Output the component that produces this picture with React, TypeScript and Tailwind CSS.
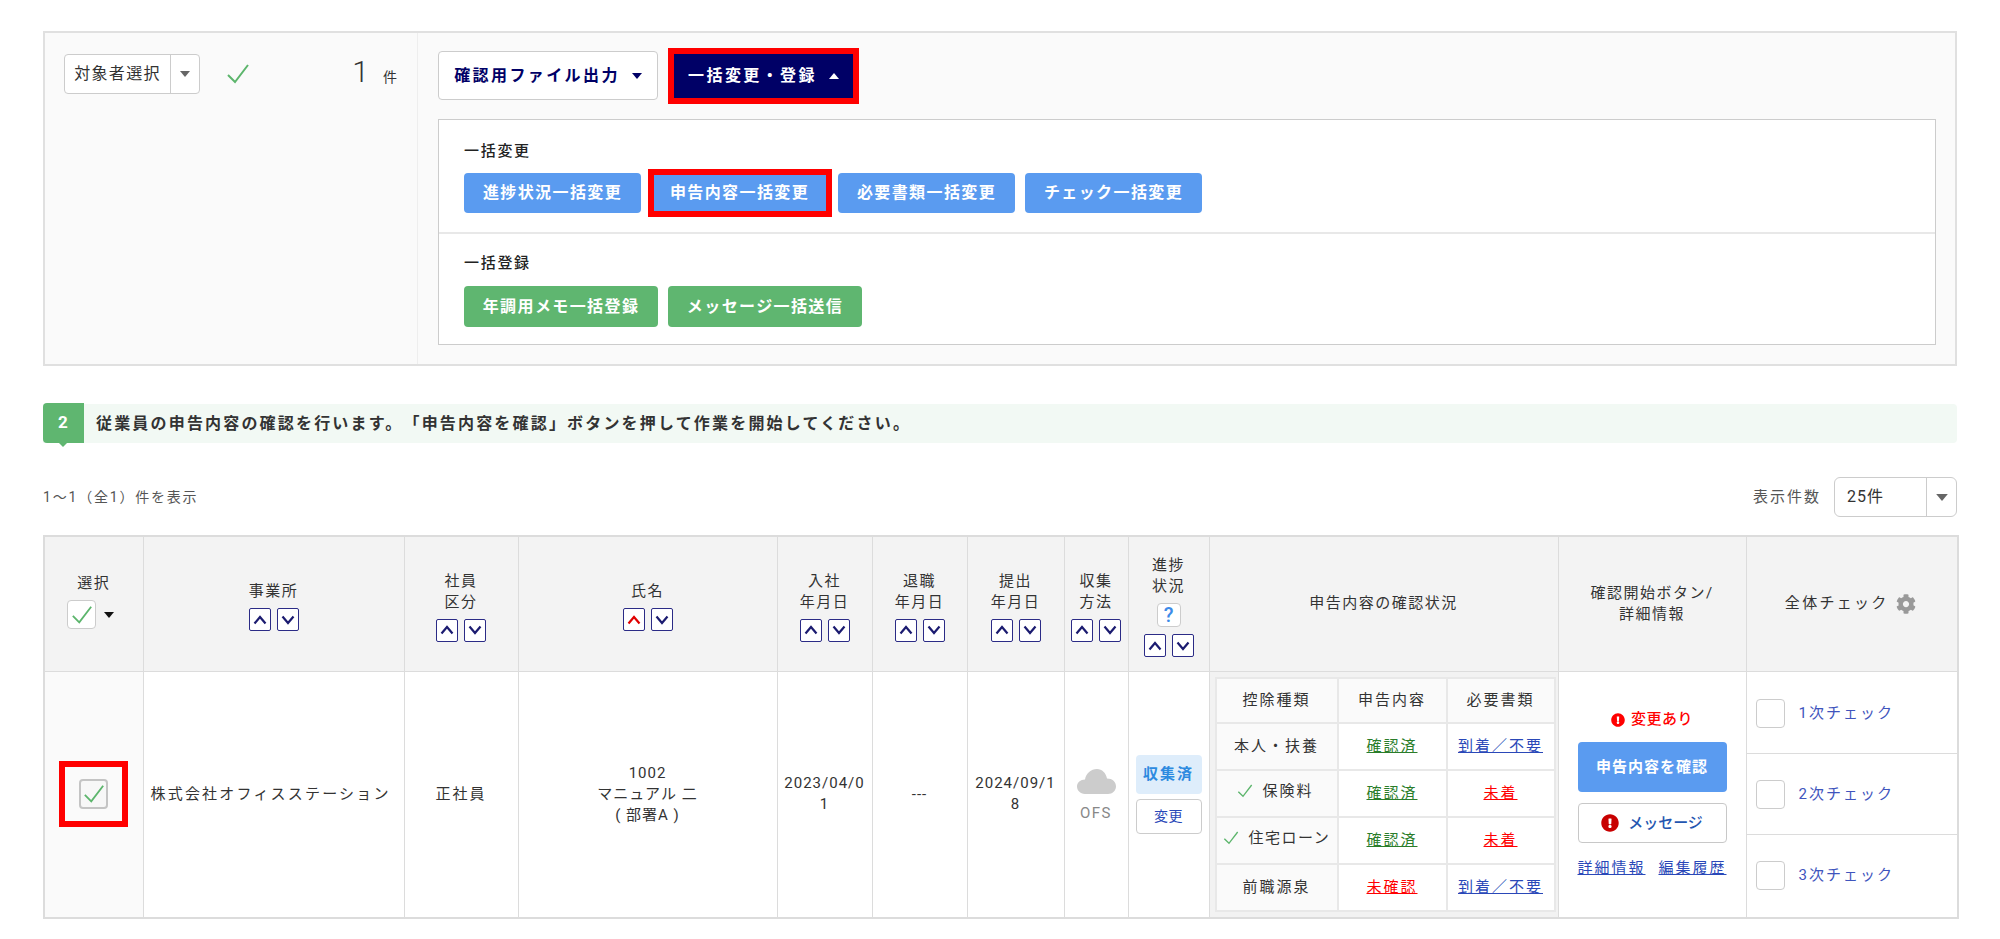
import React from "react";
import { FaCog, FaExclamationCircle } from "react-icons/fa";

const Check = ({ className = "w-[24px] h-[24px]" }: { className?: string }) => (
  <svg viewBox="0 0 24 24" className={className} fill="none" stroke="#5cb56c" strokeWidth="2">
    <polyline points="2,13 9,20 22,3" />
  </svg>
);

const Caret = ({ up = false, color = "#666", className = "" }: { up?: boolean; color?: string; className?: string }) => (
  <svg viewBox="0 0 10 6" className={"w-[10px] h-[6px] " + className}>
    <polygon points={up ? "0,6 10,6 5,0" : "0,0 10,0 5,6"} fill={color} />
  </svg>
);

const Sort = ({ dir, red = false }: { dir: "up" | "down"; red?: boolean }) => (
  <span className="inline-flex w-[22px] h-[23px] items-center justify-center border-[1.5px] border-[#2b2b86] rounded-[2px] bg-white">
    <svg viewBox="0 0 14 10" className="w-[14px] h-[10px]" fill="none" stroke={red ? "#e00000" : "#1b1b70"} strokeWidth="2.2">
      <polyline points={dir === "up" ? "1.5,8.5 7,2 12.5,8.5" : "1.5,1.5 7,8 12.5,1.5"} />
    </svg>
  </span>
);

const SortPair = ({ red = false, className = "mt-[6px]" }: { red?: boolean; className?: string }) => (
  <div className={"flex justify-center gap-[6px] tracking-normal " + className}>
    <Sort dir="up" red={red} />
    <Sort dir="down" />
  </div>
);

const BlueBtn = ({ children }: { children: React.ReactNode }) => (
  <button className="w-[177px] h-[40px] rounded-[4px] bg-[#5a9bf0] text-white font-bold text-[16px] tracking-[1.4px]">{children}</button>
);

const GreenBtn = ({ children, w }: { children: React.ReactNode; w: string }) => (
  <button className={w + " h-[41px] rounded-[4px] bg-[#5fb670] text-white font-bold text-[16px] tracking-[1.4px] whitespace-nowrap"}>{children}</button>
);

const Th = ({ children, sort = false }: { children: React.ReactNode; sort?: boolean }) => (
  <th className={"border border-[#dcdcdc] bg-[#f3f3f3] font-normal text-[15px] tracking-[1.5px] text-[#333] text-center align-middle leading-[21px] p-0 " + (sort ? "pt-[5px]" : "")}>{children}</th>
);

const Td = ({ children, className = "" }: { children?: React.ReactNode; className?: string }) => (
  <td className={"border border-[#dcdcdc] text-[15px] text-[#333] text-center align-middle p-0 leading-[21px] " + className}>{children}</td>
);

const NTd = ({ children, head = false }: { children: React.ReactNode; head?: boolean }) => (
  <td className={"border-2 border-[#e8e8e8] text-center align-middle text-[15px] tracking-[2px] text-[#333] p-0 whitespace-nowrap " + (head ? "bg-[#fafafa]" : "bg-white")}>{children}</td>
);

const L = ({ c, children }: { c: string; children: React.ReactNode }) => <a className={"underline " + c}>{children}</a>;

const green = "text-[#2a7d2a]";
const blue = "text-[#2a48b8]";
const red = "text-[#ff0000]";

const rows: [React.ReactNode, React.ReactNode, React.ReactNode][] = [
  ["本人・扶養", <L c={green}>確認済</L>, <L c={blue}>到着／不要</L>],
  [
    <span className="inline-flex items-center gap-[9px] -ml-[2px]"><Check className="w-[16px] h-[16px]" />保険料</span>,
    <L c={green}>確認済</L>,
    <L c={red}>未着</L>,
  ],
  [
    <span className="inline-flex items-center gap-[10px] tracking-[1.5px]"><Check className="w-[16px] h-[16px]" />住宅ローン</span>,
    <L c={green}>確認済</L>,
    <L c={red}>未着</L>,
  ],
  ["前職源泉", <L c={red}>未確認</L>, <L c={blue}>到着／不要</L>],
];

export default function App() {
  return (
    <div className="w-[2000px] h-[939px] bg-white px-[43px] pt-[31px] tracking-[1px] font-['Roboto','Noto_Sans_CJK_JP',sans-serif] overflow-hidden">
      {/* operation panel */}
      <div className="flex h-[335px] border-2 border-[#e0e0e0] bg-[#fafafa]">
        <div className="w-[373px] border-r border-[#eeeeee] flex items-start pt-[21px] pl-[19px] pr-[19px]">
          <div className="flex h-[40px] w-[136px] border border-[#cccccc] rounded-[4px] bg-white">
            <span className="w-[106px] border-r border-[#cccccc] flex items-center justify-center text-[16px] text-[#333] tracking-[1.3px] whitespace-nowrap">対象者選択</span>
            <span className="flex-1 flex items-center justify-center"><Caret /></span>
          </div>
          <Check className="w-[24px] h-[24px] ml-[26px] mt-[8px]" />
          <span className="ml-auto text-[30px] leading-[36px] text-[#333] font-light">1</span>
          <span className="ml-[13px] mt-[13px] text-[14px] leading-[20px] text-[#333]">件</span>
        </div>
        <div className="flex-1 pt-[18px] pl-[20px] pr-[19px]">
          <div className="flex items-center h-[49px]">
            <button className="w-[220px] h-[49px] border border-[#cccccc] rounded-[4px] bg-white text-[#000066] font-bold text-[16px] tracking-[2.4px] flex items-center justify-center gap-[12px] whitespace-nowrap">
              確認用ファイル出力<Caret color="#000066" className="w-[8px] h-[5px]" />
            </button>
            <button className="ml-[10px] w-[191px] h-[56px] border-[6px] border-[#ff0000] bg-[#000066] text-white font-bold text-[16px] tracking-[2.4px] flex items-center justify-center gap-[12px] whitespace-nowrap">
              一括変更・登録<Caret up color="#ffffff" className="w-[10px] h-[6px]" />
            </button>
          </div>
          <div className="mt-[19px] h-[226px] border border-[#cccccc] bg-white">
            <div className="h-[114px] border-b-2 border-[#e8e8e8] px-[25px] pt-[21px]">
              <div className="text-[15px] leading-[20px] text-[#222] font-medium tracking-[1.7px]">一括変更</div>
              <div className="flex gap-[10px] mt-[12px]">
                <BlueBtn>進捗状況一括変更</BlueBtn>
                <div className="relative">
                  <BlueBtn>申告内容一括変更</BlueBtn>
                  <div className="absolute -left-[3px] -right-[4px] -top-[4px] -bottom-[4px] border-[6px] border-[#ff0000]" />
                </div>
                <BlueBtn>必要書類一括変更</BlueBtn>
                <BlueBtn>チェック一括変更</BlueBtn>
              </div>
            </div>
            <div className="px-[25px] pt-[19px]">
              <div className="text-[15px] leading-[20px] text-[#222] font-medium tracking-[1.7px]">一括登録</div>
              <div className="flex gap-[10px] mt-[13px]">
                <GreenBtn w="w-[194px]">年調用メモ一括登録</GreenBtn>
                <GreenBtn w="w-[194px]">メッセージ一括送信</GreenBtn>
              </div>
            </div>
          </div>
        </div>
      </div>

      {/* step banner */}
      <div className="mt-[38px] flex h-[39px] bg-[#f2f9f4] rounded-r-[4px]">
        <div className="relative w-[41px] h-[40px] -mt-[1px] bg-[#5fb670] rounded-l-[4px] flex items-center justify-center text-white font-bold text-[17px]">
          2
          <svg viewBox="0 0 10 5" className="absolute left-[15px] -bottom-[4px] w-[10px] h-[5px]">
            <polygon points="0,0 10,0 5,5" fill="#5fb670" />
          </svg>
        </div>
        <div className="ml-[12px] flex items-center text-[16px] font-bold text-[#333] tracking-[2.18px] whitespace-nowrap [font-feature-settings:'chws'_0] [text-spacing-trim:space-all]">
          従業員の申告内容の確認を行います。「申告内容を確認」ボタンを押して作業を開始してください。
        </div>
      </div>

      {/* list header */}
      <div className="mt-[34px] h-[40px] flex items-center justify-between">
        <span className="text-[14px] text-[#555] tracking-[1.8px]">1～1（全1）件を表示</span>
        <div className="flex items-center">
          <span className="text-[15px] text-[#555] tracking-[2px] mr-[13px]">表示件数</span>
          <div className="flex w-[123px] h-[40px] border border-[#cccccc] rounded-[6px] bg-white">
            <span className="w-[92px] border-r border-[#cccccc] flex items-center pl-[12px] text-[16px] text-[#333]">25件</span>
            <span className="flex-1 flex items-center justify-center"><Caret className="w-[12px] h-[7px]" /></span>
          </div>
        </div>
      </div>

      {/* table */}
      <table className="mt-[18px] w-[1914px] table-fixed border-collapse border-2 border-[#dcdcdc]">
        <colgroup>
          <col className="w-[99px]" />
          <col className="w-[261px]" />
          <col className="w-[114px]" />
          <col className="w-[259px]" />
          <col className="w-[95px]" />
          <col className="w-[95px]" />
          <col className="w-[97px]" />
          <col className="w-[64px]" />
          <col className="w-[81px]" />
          <col className="w-[349px]" />
          <col className="w-[188px]" />
          <col className="w-[212px]" />
        </colgroup>
        <thead>
          <tr className="h-[135px]">
            <Th>
              <div className="pb-[5px]">
                <div>選択</div>
                <div className="flex items-center justify-center gap-[8px] mt-[6px] -ml-[6px]">
                  <span className="w-[29px] h-[29px] flex items-center justify-center bg-white border border-[#cccccc] rounded-[4px]"><Check className="w-[22px] h-[22px]" /></span>
                  <Caret color="#111111" className="w-[9px] h-[5px]" />
                </div>
              </div>
            </Th>
            <Th sort>事業所<SortPair /></Th>
            <Th sort>社員<br />区分<SortPair /></Th>
            <Th sort>氏名<SortPair red /></Th>
            <Th sort>入社<br />年月日<SortPair /></Th>
            <Th sort>退職<br />年月日<SortPair /></Th>
            <Th sort>提出<br />年月日<SortPair /></Th>
            <Th sort>収集<br />方法<SortPair /></Th>
            <Th sort>
              進捗<br />状況
              <div className="flex justify-center mt-[6px]">
                <span className="w-[24px] h-[24px] flex items-center justify-center bg-white border border-[#cccccc] rounded-[4px] text-[#3d8be8] text-[20px] font-medium tracking-normal">?</span>
              </div>
              <SortPair className="mt-[7px]" />
            </Th>
            <Th>申告内容の確認状況</Th>
            <Th>確認開始ボタン/<br />詳細情報</Th>
            <Th>
              <span className="inline-flex items-center gap-[7px] tracking-[2.3px] -ml-[3px]">全体チェック<FaCog className="text-[#999999] w-[20px] h-[20px]" /></span>
            </Th>
          </tr>
        </thead>
        <tbody>
          <tr className="h-[244px]">
            <Td className="bg-[#fafafa]">
              <div className="mx-auto w-[69px] h-[66px] border-[6px] border-[#ff0000] flex items-center justify-center">
                <span className="w-[29px] h-[30px] flex items-center justify-center bg-[#f7f7f7] border-2 border-[#c4c4c4] rounded-[4px]"><Check className="w-[22px] h-[22px]" /></span>
              </div>
            </Td>
            <Td className="whitespace-nowrap text-left pl-[7px] tracking-[2.2px]">株式会社オフィスステーション</Td>
            <Td className="tracking-[2px]">正社員</Td>
            <Td>1002<br />マニュアル 二<br />( 部署A )</Td>
            <Td className="break-all px-[6px]">2023/04/01</Td>
            <Td>---</Td>
            <Td className="break-all px-[6px]">2024/09/18</Td>
            <Td className="pt-[5px]">
              <svg viewBox="0 0 39 25" className="mx-auto w-[39px] h-[25px]">
                <path d="M8 25 C3 25 0 21 0 17.5 C0 13.5 3.5 10.5 8 10.5 C9 4.5 14 0 20 0 C25 0 29 4 30 9.5 C35.5 9.5 39 13 39 17.5 C39 21.5 35.5 25 31 25 Z" fill="#cccccc" />
              </svg>
              <div className="text-[#888888] text-[15px] tracking-[1.5px] mt-[9px]">OFS</div>
            </Td>
            <Td>
              <div className="mx-auto w-[66px] h-[39px] rounded-[4px] bg-[#deedfb] text-[#2d8ae0] font-bold flex items-center justify-center whitespace-nowrap tracking-[2px]">収集済</div>
              <div className="mx-auto mt-[5px] w-[66px] h-[35px] rounded-[4px] bg-white border border-[#cccccc] text-[#2a48b8] text-[14px] tracking-[0.5px] flex items-center justify-center">変更</div>
            </Td>
            <td className="border border-[#dcdcdc] bg-[#f2f2f2] p-[5px] align-middle">
              <table className="w-full h-[233px] table-fixed border-collapse">
                <colgroup>
                  <col className="w-[122px]" />
                  <col className="w-[109px]" />
                  <col className="w-[108px]" />
                </colgroup>
                <tbody>
                  <tr className="h-[45px]">
                    <NTd head>控除種類</NTd>
                    <NTd head>申告内容</NTd>
                    <NTd head>必要書類</NTd>
                  </tr>
                  {rows.map((r, i) => (
                    <tr key={i} className="h-[47px]">
                      <NTd head>{r[0]}</NTd>
                      <NTd>{r[1]}</NTd>
                      <NTd>{r[2]}</NTd>
                    </tr>
                  ))}
                </tbody>
              </table>
            </td>
            <Td>
              <div className="flex flex-col items-center">
                <div className="flex items-center gap-[6px] text-[#ff0000] text-[15px] tracking-[0.5px] font-medium">
                  <FaExclamationCircle className="w-[14px] h-[14px]" />変更あり
                </div>
                <button className="mt-[12px] w-[149px] h-[50px] rounded-[4px] bg-[#5a9bf0] text-white font-bold text-[15px] tracking-[1px]">申告内容を確認</button>
                <button className="mt-[11px] w-[149px] h-[40px] rounded-[4px] bg-white border border-[#c8c8c8] text-[#2456b0] text-[15px] tracking-normal font-medium flex items-center justify-center gap-[9px]">
                  <FaExclamationCircle className="w-[18px] h-[18px] text-[#c80000]" />メッセージ
                </button>
                <div className="mt-[15px] w-[149px] flex justify-between whitespace-nowrap tracking-[2px]">
                  <L c={blue}>詳細情報</L>
                  <L c={blue}>編集履歴</L>
                </div>
              </div>
            </Td>
            <td className="border border-[#dcdcdc] p-0">
              <div className="flex flex-col h-[242px]">
                {["1次チェック", "2次チェック", "3次チェック"].map((t, i) => (
                  <div key={t} className={"flex-1 flex items-center pl-[9px] " + (i < 2 ? "border-b border-[#dcdcdc]" : "")}>
                    <span className="w-[29px] h-[29px] bg-white border border-[#cccccc] rounded-[4px]" />
                    <span className="ml-[14px] text-[15px] text-[#3f55bd] tracking-[2px]">{t}</span>
                  </div>
                ))}
              </div>
            </td>
          </tr>
        </tbody>
      </table>
    </div>
  );
}
